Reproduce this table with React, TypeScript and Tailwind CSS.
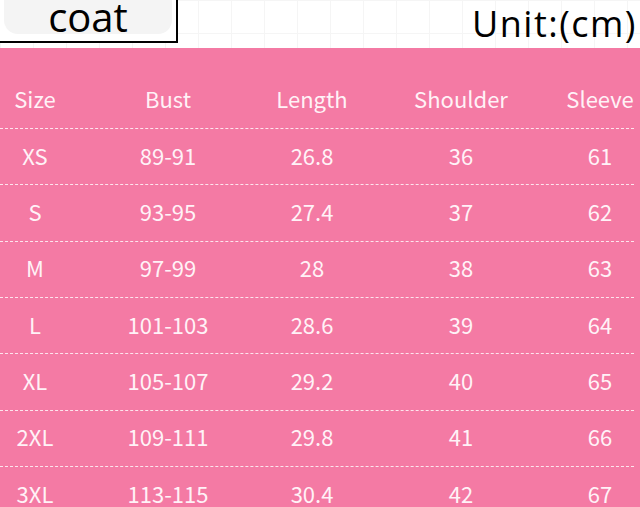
const rows = [
    ['XS', '89-91', '26.8', '36', '61'],
    ['S', '93-95', '27.4', '37', '62'],
    ['M', '97-99', '28', '38', '63'],
    ['L', '101-103', '28.6', '39', '64'],
    ['XL', '105-107', '29.2', '40', '65'],
    ['2XL', '109-111', '29.8', '41', '66'],
    ['3XL', '113-115', '30.4', '42', '67'],
];

const headers = ['Size', 'Bust', 'Length', 'Shoulder', 'Sleeve'];

const cols = 'grid grid-cols-[70px_196px_92px_206px_72px] w-[636px]';

export default function App() {
    return (
        <div className="h-[507px] w-[640px] overflow-hidden bg-white">
            {/* title strip */}
            <div className="flex h-[48px] items-start justify-between bg-[linear-gradient(to_right,#f5f5f5_1px,transparent_1px),linear-gradient(to_bottom,#f5f5f5_1px,transparent_1px)] bg-[size:33px_33px]">
                <div className="h-[43px] w-[178px] border-r-2 border-b-2 border-black bg-white px-[4px] pb-[7px]">
                    <div className="flex h-full items-center justify-center rounded-b-[14px] bg-[#f4f4f4] font-['Open_Sans',sans-serif] text-[40px] leading-none text-black">
                        coat
                    </div>
                </div>
                <div className="pr-[3px] pt-[3px] font-['Open_Sans',sans-serif] text-[36px] leading-[42px] tracking-[1.5px] text-black">
                    Unit:(cm)
                </div>
            </div>

            {/* size table */}
            <div className="bg-[#f47aa4] font-['Noto_Sans_CJK_SC',sans-serif] font-normal text-[22px] text-[#fff2f7]">
                <div className={cols + ' h-[80px] items-center pt-[20px]'}>
                    {headers.map((h) => (
                        <div key={h} className="text-center leading-[28px] whitespace-nowrap">
                            {h}
                        </div>
                    ))}
                </div>
                <div className="mr-[6px] border-b border-dashed border-white/80" />
                {rows.map((r) => (
                    <div key={r[0]}>
                        <div className={cols + ' h-[55.33px] items-center pb-[4px]'}>
                            {r.map((v, i) => (
                                <div key={i} className="text-center leading-[28px]">
                                    {v}
                                </div>
                            ))}
                        </div>
                        <div className="mr-[6px] border-b border-dashed border-white/80" />
                    </div>
                ))}
            </div>
        </div>
    );
}
